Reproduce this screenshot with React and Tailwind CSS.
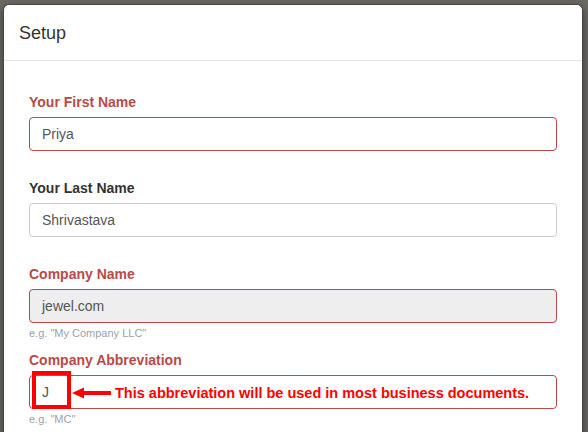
import React from 'react';

const font = { fontFamily: '"Liberation Sans", Arial, sans-serif' };

function Field({ label, value, error, readOnly, help, className = '', children }) {
  return (
    <div className={className}>
      <label
        className={`block text-[14px] font-bold leading-[20px] mb-[5px] ${
          error ? 'text-[#b94a48]' : 'text-[#333]'
        }`}
      >
        {label}
      </label>
      <div className="relative">
        <div
          className={`h-[34px] rounded-[4px] border px-[12px] flex items-center text-[14px] text-[#555] ${
            error ? 'border-[#b94a48]' : 'border-[#ccc]'
          } ${readOnly ? 'bg-[#eee]' : 'bg-white'}`}
        >
          {value}
        </div>
        {children}
      </div>
      {help && (
        <p className="mt-[3px] text-[11px] leading-[14px] text-[#9a9fae]">{help}</p>
      )}
    </div>
  );
}

export default function App() {
  return (
    <div className="w-[588px] h-[432px] overflow-hidden bg-[#6c6965] pt-[4px] pl-[3px] pr-[5px]" style={font}>
      <div className="bg-white rounded-t-[6px] border border-[#4a4845] border-b-0 h-[440px] shadow-[0_3px_9px_rgba(0,0,0,0.5)]">
        {/* Header */}
        <div className="h-[56px] px-[15px] flex items-center border-b border-[#e5e5e5]">
          <h4 className="text-[18px] leading-[26px] text-[#333] font-normal">Setup</h4>
        </div>

        {/* Body */}
        <div className="pt-[31px] px-[25px]">
          <Field className="mb-[27px]" label="Your First Name" value="Priya" error />
          <Field className="mb-[27px]" label="Your Last Name" value="Shrivastava" />
          <Field
            className="mb-[10px]"
            label="Company Name"
            value="jewel.com"
            error
            readOnly
            help={'e.g. "My Company LLC"'}
          />
          <Field label="Company Abbreviation" value="J" error help={'e.g. "MC"'}>
            {/* annotation: highlight box */}
            <div className="absolute left-[3px] top-[-4px] w-[39px] h-[38px] border-[4px] border-[#ff0000]" />
            {/* annotation: arrow */}
            <div className="absolute left-[43px] top-[10px] flex items-center">
              <svg width="40" height="12" viewBox="0 0 40 12">
                <polygon points="0,6 12,0.5 12,11.5" fill="#ff0000" />
                <rect x="11" y="4" width="28" height="4" fill="#ff0000" />
              </svg>
              <span className="ml-[3px] text-[14.5px] font-bold text-[#ff0000] leading-[16px] whitespace-nowrap">
                This abbreviation will be used in most business documents.
              </span>
            </div>
          </Field>
        </div>
      </div>
    </div>
  );
}
